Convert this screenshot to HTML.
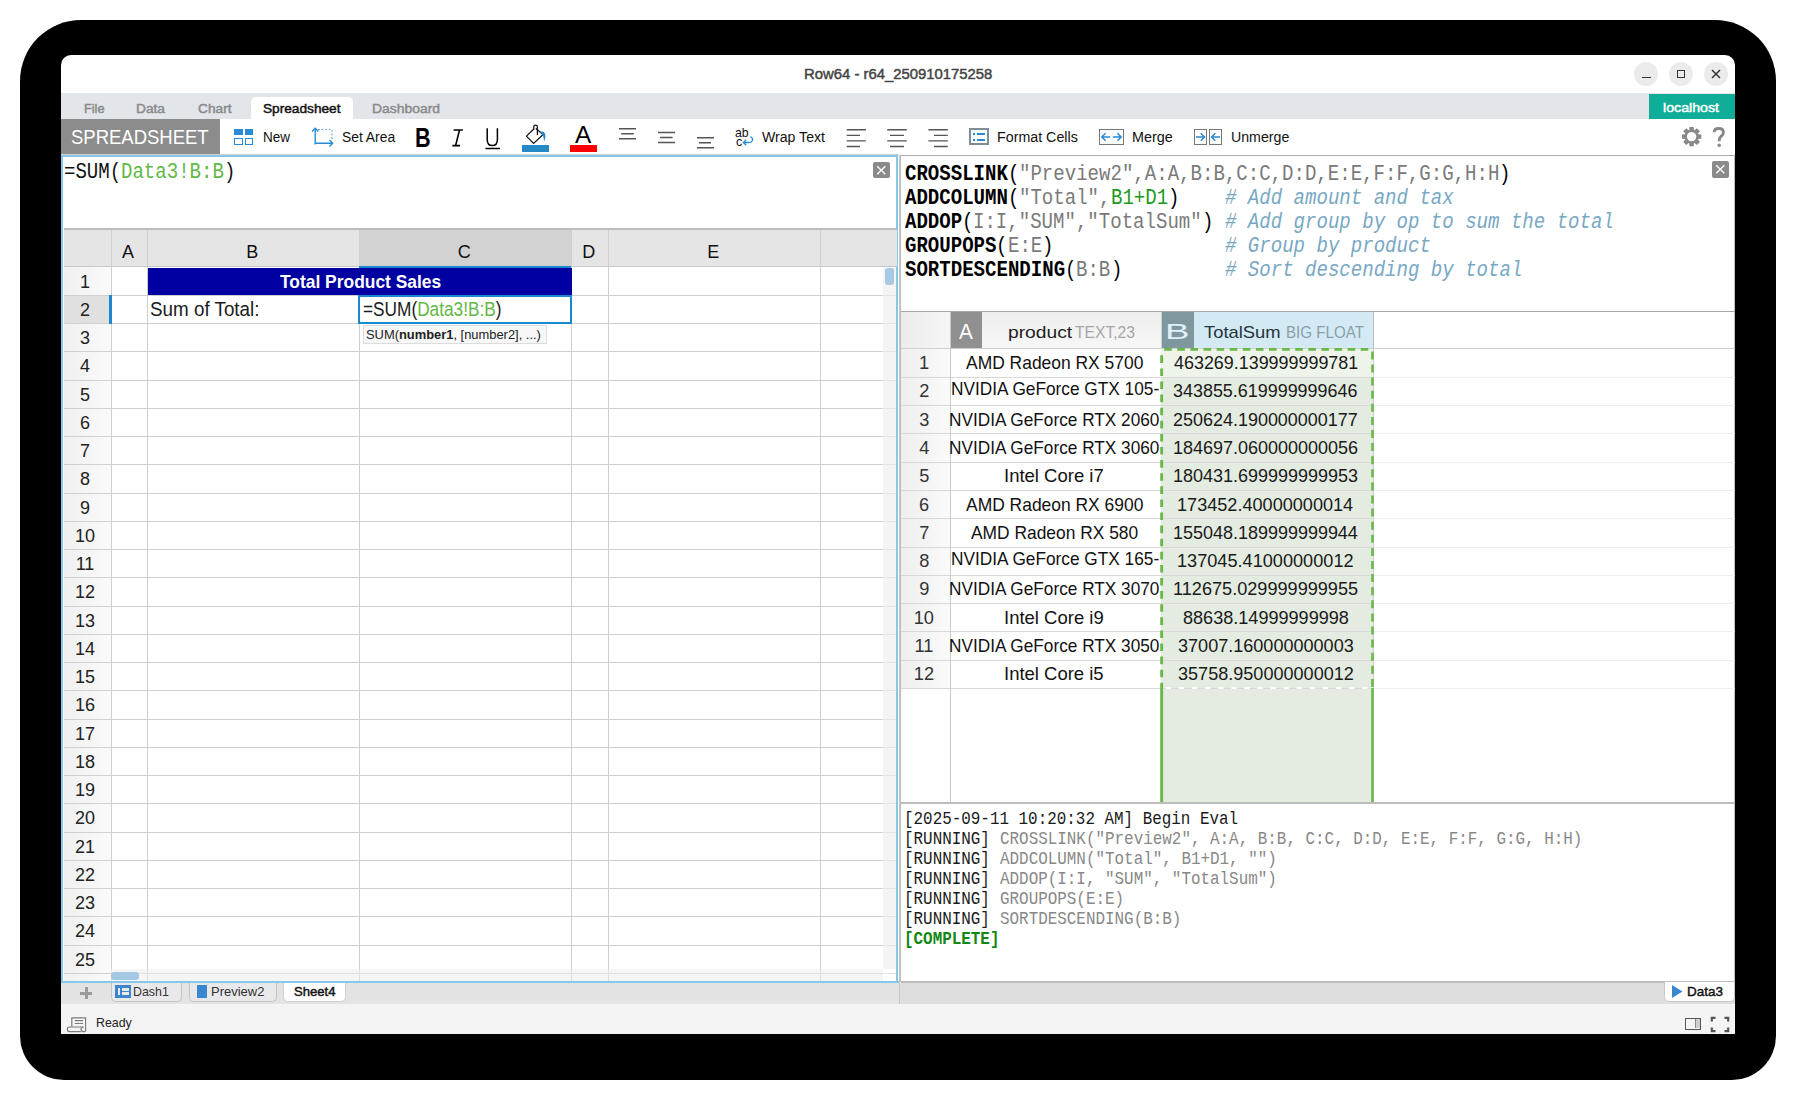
<!DOCTYPE html><html><head><meta charset="utf-8"><title>Row64</title><style>
*{margin:0;padding:0;box-sizing:border-box}
html,body{width:1796px;height:1101px;overflow:hidden;background:#fff;font-family:"Liberation Sans",sans-serif;position:relative}
.abs{position:absolute}
.t{position:absolute;white-space:pre;line-height:1}
svg{position:absolute;overflow:visible}
</style></head><body>
<div class="abs" style="left:20px;top:20px;width:1756px;height:1060px;background:#000;border-radius:61px 61px 44px 44px"></div>
<div class="abs" style="left:61px;top:55px;width:1674px;height:979px;background:#fff;border-radius:10px 10px 0 0"></div>
<div class="t" style="left:804.28px;top:66.80px;font:normal normal 14.5px/1 'Liberation Sans',sans-serif;color:#444;transform:scaleX(1.0247);transform-origin:0 0;-webkit-text-stroke:0.45px currentColor;">Row64 - r64_250910175258</div>
<div class="abs" style="left:1634px;top:62px;width:24px;height:24px;background:#ebebeb;border-radius:12px"></div>
<div class="abs" style="left:1669px;top:62px;width:24px;height:24px;background:#ebebeb;border-radius:12px"></div>
<div class="abs" style="left:1704px;top:62px;width:24px;height:24px;background:#ebebeb;border-radius:12px"></div>
<div class="abs" style="left:1641.5px;top:77px;width:9.5px;height:1.2px;background:#333;"></div>
<div class="abs" style="left:1677px;top:70px;width:8px;height:8px;border:1.5px solid #333"></div>
<svg style="left:1711px;top:69px" width="10" height="10"><path d="M1 1L9 9M9 1L1 9" stroke="#333" stroke-width="1.5"/></svg>
<div class="abs" style="left:61px;top:93px;width:1674px;height:26px;background:#e2e5e9;"></div>
<div class="abs" style="left:251px;top:97px;width:102px;height:22px;background:#fff;border-radius:5px 5px 0 0"></div>
<div class="t" style="left:83.50px;top:101.70px;font:normal normal 13px/1 'Liberation Sans',sans-serif;color:#8a8a8a;transform:scaleX(0.9787);transform-origin:0 0;-webkit-text-stroke:0.45px currentColor;">File</div>
<div class="t" style="left:136.00px;top:101.70px;font:normal normal 13px/1 'Liberation Sans',sans-serif;color:#8a8a8a;transform:scaleX(1.0561);transform-origin:0 0;-webkit-text-stroke:0.45px currentColor;">Data</div>
<div class="t" style="left:197.50px;top:101.70px;font:normal normal 13px/1 'Liberation Sans',sans-serif;color:#8a8a8a;transform:scaleX(1.0538);transform-origin:0 0;-webkit-text-stroke:0.45px currentColor;">Chart</div>
<div class="t" style="left:263.00px;top:101.70px;font:normal normal 13px/1 'Liberation Sans',sans-serif;color:#111;transform:scaleX(1.0512);transform-origin:0 0;-webkit-text-stroke:0.45px currentColor;">Spreadsheet</div>
<div class="t" style="left:371.50px;top:101.70px;font:normal normal 13px/1 'Liberation Sans',sans-serif;color:#8a8a8a;transform:scaleX(1.0692);transform-origin:0 0;-webkit-text-stroke:0.45px currentColor;">Dashboard</div>
<div class="abs" style="left:1649px;top:94px;width:86px;height:25px;background:#10ae98;"></div>
<div class="t" style="left:1663.00px;top:100.50px;font:normal normal 13px/1 'Liberation Sans',sans-serif;color:#fff;transform:scaleX(1.0914);transform-origin:0 0;-webkit-text-stroke:0.45px currentColor;">localhost</div>
<div class="abs" style="left:61px;top:119px;width:159px;height:36px;background:#8c8c8c;"></div>
<div class="t" style="left:70.50px;top:126.40px;font:normal normal 21px/1 'Liberation Sans',sans-serif;color:#fff;transform:scaleX(0.8800);transform-origin:0 0;">SPREADSHEET</div>
<div class="abs" style="left:234px;top:129px;width:8.5px;height:6px;background:#2a8ad4;"></div>
<div class="abs" style="left:244.5px;top:129px;width:8.5px;height:6px;background:#2a8ad4;"></div>
<div class="abs" style="left:234px;top:138px;width:8.5px;height:6.8px;border:1.6px solid #2a8ad4"></div>
<div class="abs" style="left:244.5px;top:138px;width:8.5px;height:6.8px;border:1.6px solid #2a8ad4"></div>
<div class="t" style="left:262.90px;top:129.30px;font:normal normal 15.5px/1 'Liberation Sans',sans-serif;color:#111;transform:scaleX(0.8740);transform-origin:0 0;">New</div>
<svg style="left:310px;top:126px" width="26" height="22"><path d="M5.2 18.5V2.5M2 5.5L5.2 2.3L8.4 5.5M5.2 17.2H22.5M19.5 14L22.7 17.2L19.5 20.4" stroke="#2a8ad4" stroke-width="1.4" fill="none"/><path d="M8 3.5H22V14" stroke="#2a8ad4" stroke-width="1.2" stroke-dasharray="1.8 1.8" fill="none" opacity="0.75"/></svg>
<div class="t" style="left:342.30px;top:129.30px;font:normal normal 15.5px/1 'Liberation Sans',sans-serif;color:#111;transform:scaleX(0.8931);transform-origin:0 0;">Set Area</div>
<div class="t" style="left:415.46px;top:124.80px;font:normal bold 27px/1 'Liberation Sans',sans-serif;color:#000;transform:scaleX(0.8010);transform-origin:0 0;">B</div>
<svg style="left:448px;top:124px" width="20" height="26"><path d="M5.6 6H14.9M4.3 21.6H12.1M11.5 6L7.6 21.6" stroke="#000" stroke-width="1.6" fill="none"/></svg>
<svg style="left:484px;top:126px" width="18" height="26"><path d="M3.2 2.2V13.5Q3.2 19.6 8.3 19.6Q13.4 19.6 13.4 13.5V2.2" stroke="#000" stroke-width="1.5" fill="none"/><path d="M1.5 22.5H16" stroke="#000" stroke-width="1.5"/></svg>
<svg style="left:520px;top:120px" width="32" height="32"><path d="M6.4 16.1L13.6 23.4L23.1 14.5L15.8 8.4" stroke="#111" stroke-width="1.25" fill="none" stroke-linejoin="miter"/><path d="M6.4 16.1L13.8 9" stroke="#111" stroke-width="1.25" fill="none"/><path d="M13.8 9.6V6.8Q13.8 5.2 15.6 5.2Q17.4 5.2 17.4 6.8V15" stroke="#111" stroke-width="1.25" fill="none"/><path d="M20.2 12.2Q22 10.6 24 12.2Q26.2 14.5 25 18.8Q24.6 20.5 24.1 21.5Q24.4 17 21.5 13.5Z" fill="#2589c8"/></svg>
<div class="abs" style="left:521.5px;top:145.3px;width:27px;height:6.3px;background:#2589c8;"></div>
<div class="t" style="left:575.00px;top:123.00px;font:normal normal 24.5px/1 'Liberation Sans',sans-serif;color:#000;transform:scaleX(0.9975);transform-origin:0 0;">A</div>
<div class="abs" style="left:570px;top:145.3px;width:27.2px;height:6.3px;background:#ff0000;"></div>
<svg style="left:600px;top:120px" width="400" height="35"><path d="M19.00 8.70H36.00M21.30 13.70H33.80M19.00 18.70H36.00" stroke="#555" stroke-width="1.35" fill="none"/></svg>
<svg style="left:600px;top:120px" width="400" height="35"><path d="M58.00 12.50H75.00M60.00 17.50H72.60M58.00 22.50H75.00" stroke="#555" stroke-width="1.35" fill="none"/></svg>
<svg style="left:600px;top:120px" width="400" height="35"><path d="M97.00 17.70H114.00M99.00 22.70H111.00M97.00 27.70H114.00" stroke="#555" stroke-width="1.35" fill="none"/></svg>
<div class="t" style="left:735.40px;top:125.50px;font:normal normal 13.5px/1 'Liberation Sans',sans-serif;color:#111;transform:scaleX(0.9057);transform-origin:0 0;">ab</div>
<div class="t" style="left:736.00px;top:134.70px;font:normal normal 13.5px/1 'Liberation Sans',sans-serif;color:#111;transform:scaleX(0.9185);transform-origin:0 0;">c</div>
<svg style="left:740px;top:134px" width="16" height="14"><path d="M10.5 2.5Q13 4 12.5 6.5Q11.5 8.8 8.5 8.5L3.5 8.5M6.2 5.8L3.4 8.5L6.2 11.2" stroke="#2a8ad4" stroke-width="1.3" fill="none"/></svg>
<div class="t" style="left:761.94px;top:129.20px;font:normal normal 15.3px/1 'Liberation Sans',sans-serif;color:#111;transform:scaleX(0.9218);transform-origin:0 0;">Wrap Text</div>
<svg style="left:600px;top:120px" width="400" height="35"><path d="M246.70 9.70H265.90M246.70 15.40H260.00M246.70 20.90H265.90M246.70 26.50H260.00" stroke="#555" stroke-width="1.35" fill="none"/></svg>
<svg style="left:600px;top:120px" width="400" height="35"><path d="M287.20 9.70H306.80M290.00 15.40H304.00M287.20 20.90H306.80M290.00 26.50H304.00" stroke="#555" stroke-width="1.35" fill="none"/></svg>
<svg style="left:600px;top:120px" width="400" height="35"><path d="M328.40 9.70H347.80M334.00 15.40H347.80M328.40 20.90H347.80M334.00 26.50H347.80" stroke="#555" stroke-width="1.35" fill="none"/></svg>
<div class="abs" style="left:969px;top:128.3px;width:20px;height:17px;border:2px solid #7f8d96"></div>
<div class="abs" style="left:973px;top:132.5px;width:2.2px;height:2px;background:#2a8ad4;"></div>
<div class="abs" style="left:977px;top:132.5px;width:8px;height:2px;background:#2a8ad4;"></div>
<div class="abs" style="left:973px;top:138.5px;width:2.2px;height:2px;background:#2a8ad4;"></div>
<div class="abs" style="left:977px;top:138.5px;width:8px;height:2px;background:#2a8ad4;"></div>
<div class="t" style="left:996.84px;top:129.00px;font:normal normal 15.3px/1 'Liberation Sans',sans-serif;color:#111;transform:scaleX(0.9316);transform-origin:0 0;">Format Cells</div>
<div class="abs" style="left:1099px;top:129px;width:25px;height:16px;border:1px solid #777"></div>
<svg style="left:1099px;top:129px" width="25" height="16"><path d="M2.8 8H11.2M6.6 4.2L2.8 8L6.6 11.8M13.8 8H22.2M18.4 4.2L22.2 8L18.4 11.8" stroke="#2a8ad4" stroke-width="1.5" fill="none"/></svg>
<div class="t" style="left:1132.42px;top:129.30px;font:normal normal 15.3px/1 'Liberation Sans',sans-serif;color:#111;transform:scaleX(0.9411);transform-origin:0 0;">Merge</div>
<div class="abs" style="left:1194px;top:129px;width:12.5px;height:16px;border:1px solid #777"></div>
<div class="abs" style="left:1209px;top:129px;width:12.8px;height:16px;border:1px solid #777"></div>
<svg style="left:1194px;top:129px" width="28" height="16"><path d="M2 8H10.5M6.8 4.2L10.6 8L6.8 11.8M17.5 8H26M21.3 4.2L17.5 8L21.3 11.8" stroke="#2a8ad4" stroke-width="1.5" fill="none"/></svg>
<div class="t" style="left:1230.51px;top:129.30px;font:normal normal 15.3px/1 'Liberation Sans',sans-serif;color:#111;transform:scaleX(0.9268);transform-origin:0 0;">Unmerge</div>
<svg style="left:1670px;top:120px" width="40" height="40"><path d="M28.20 14.27 L31.26 14.44 L31.26 18.76 L28.20 18.93 L27.92 19.62 L29.96 21.90 L26.90 24.96 L24.62 22.92 L23.93 23.20 L23.76 26.26 L19.44 26.26 L19.27 23.20 L18.58 22.92 L16.30 24.96 L13.24 21.90 L15.28 19.62 L15.00 18.93 L11.94 18.76 L11.94 14.44 L15.00 14.27 L15.28 13.58 L13.24 11.30 L16.30 8.24 L18.58 10.28 L19.27 10.00 L19.44 6.94 L23.76 6.94 L23.93 10.00 L24.62 10.28 L26.90 8.24 L29.96 11.30 L27.92 13.58Z M26.30 16.60A4.7 4.7 0 1 0 16.90 16.60A4.7 4.7 0 1 0 26.30 16.60Z" fill="#888" fill-rule="evenodd"/></svg>
<svg style="left:1706px;top:122px" width="26" height="28"><path d="M8.2 10.2Q8.2 6.5 12.7 6.5Q17.4 6.5 17.4 10.4Q17.4 12.8 15.2 14.3Q13.2 15.7 13.2 18.2V19.2" stroke="#888" stroke-width="2.9" fill="none"/><circle cx="13.2" cy="23.3" r="1.75" fill="#888"/></svg>
<div class="abs" style="left:61px;top:155px;width:838px;height:827px;background:#fff;"></div>
<div class="abs" style="left:61px;top:154px;width:838px;height:1px;background:#d0d0d0;"></div>
<div class="abs" style="left:61px;top:155.2px;width:837px;height:827.8px;border:2px solid #86c7ea;border-left-width:2.6px;border-right-width:2.5px;border-bottom-width:2.2px"></div>
<div class="t" style="left:63.50px;top:161.50px;font:normal normal 22.0px/1 'Liberation Mono',monospace;color:#111;transform:scaleX(0.8663);transform-origin:0 0;">=SUM(</div>
<div class="t" style="left:120.69px;top:161.50px;font:normal normal 22.0px/1 'Liberation Mono',monospace;color:#62b845;transform:scaleX(0.8663);transform-origin:0 0;">Data3!B:B</div>
<div class="t" style="left:223.62px;top:161.50px;font:normal normal 22.0px/1 'Liberation Mono',monospace;color:#111;transform:scaleX(0.8663);transform-origin:0 0;">)</div>
<div class="abs" style="left:873px;top:161.5px;width:16.5px;height:16.5px;background:#8a8a8a;border-radius:2px"></div>
<svg style="left:873px;top:161.5px" width="17" height="17"><path d="M4.2 4.2L12.3 12.3M12.3 4.2L4.2 12.3" stroke="#fff" stroke-width="1.3"/></svg>
<div class="abs" style="left:64px;top:228px;width:833px;height:2px;background:#bcbcbc;"></div>
<div class="abs" style="left:64px;top:230px;width:833px;height:37px;background:#e5e5e5;"></div>
<div class="abs" style="left:359px;top:230px;width:212px;height:37px;background:#d2d2d2;"></div>
<div class="abs" style="left:110.5px;top:230px;width:1.2px;height:37px;background:#cfcfcf;"></div>
<div class="abs" style="left:147px;top:230px;width:1.2px;height:37px;background:#cfcfcf;"></div>
<div class="abs" style="left:359px;top:230px;width:1.2px;height:37px;background:#cfcfcf;"></div>
<div class="abs" style="left:571px;top:230px;width:1.2px;height:37px;background:#cfcfcf;"></div>
<div class="abs" style="left:608px;top:230px;width:1.2px;height:37px;background:#cfcfcf;"></div>
<div class="abs" style="left:820px;top:230px;width:1.2px;height:37px;background:#cfcfcf;"></div>
<div class="abs" style="left:64px;top:266px;width:833px;height:1.2px;background:#c8c8c8;"></div>
<div class="abs" style="left:64px;top:267px;width:47px;height:715px;background:linear-gradient(90deg,#f0f0f0,#fafafa);"></div>
<div class="abs" style="left:64px;top:295.25px;width:46px;height:28.25px;background:#e0e0e0;"></div>
<div class="abs" style="left:111px;top:267px;width:772px;height:702px;background:#fff;"></div>
<div class="abs" style="left:64px;top:295px;width:819px;height:1px;background:#d0d0d0;"></div>
<div class="abs" style="left:64px;top:323px;width:819px;height:1px;background:#d0d0d0;"></div>
<div class="abs" style="left:64px;top:351px;width:819px;height:1px;background:#d0d0d0;"></div>
<div class="abs" style="left:64px;top:380px;width:819px;height:1px;background:#d0d0d0;"></div>
<div class="abs" style="left:64px;top:408px;width:819px;height:1px;background:#d0d0d0;"></div>
<div class="abs" style="left:64px;top:436px;width:819px;height:1px;background:#d0d0d0;"></div>
<div class="abs" style="left:64px;top:464px;width:819px;height:1px;background:#d0d0d0;"></div>
<div class="abs" style="left:64px;top:493px;width:819px;height:1px;background:#d0d0d0;"></div>
<div class="abs" style="left:64px;top:521px;width:819px;height:1px;background:#d0d0d0;"></div>
<div class="abs" style="left:64px;top:549px;width:819px;height:1px;background:#d0d0d0;"></div>
<div class="abs" style="left:64px;top:577px;width:819px;height:1px;background:#d0d0d0;"></div>
<div class="abs" style="left:64px;top:606px;width:819px;height:1px;background:#d0d0d0;"></div>
<div class="abs" style="left:64px;top:634px;width:819px;height:1px;background:#d0d0d0;"></div>
<div class="abs" style="left:64px;top:662px;width:819px;height:1px;background:#d0d0d0;"></div>
<div class="abs" style="left:64px;top:690px;width:819px;height:1px;background:#d0d0d0;"></div>
<div class="abs" style="left:64px;top:719px;width:819px;height:1px;background:#d0d0d0;"></div>
<div class="abs" style="left:64px;top:747px;width:819px;height:1px;background:#d0d0d0;"></div>
<div class="abs" style="left:64px;top:775px;width:819px;height:1px;background:#d0d0d0;"></div>
<div class="abs" style="left:64px;top:803px;width:819px;height:1px;background:#d0d0d0;"></div>
<div class="abs" style="left:64px;top:832px;width:819px;height:1px;background:#d0d0d0;"></div>
<div class="abs" style="left:64px;top:860px;width:819px;height:1px;background:#d0d0d0;"></div>
<div class="abs" style="left:64px;top:888px;width:819px;height:1px;background:#d0d0d0;"></div>
<div class="abs" style="left:64px;top:916px;width:819px;height:1px;background:#d0d0d0;"></div>
<div class="abs" style="left:64px;top:945px;width:819px;height:1px;background:#d0d0d0;"></div>
<div class="abs" style="left:64px;top:973px;width:819px;height:1px;background:#d0d0d0;"></div>
<div class="abs" style="left:64px;top:1001px;width:819px;height:1px;background:#d0d0d0;"></div>
<div class="abs" style="left:110.5px;top:267px;width:1.1px;height:714px;background:#cfcfcf;"></div>
<div class="abs" style="left:147px;top:267px;width:1.1px;height:714px;background:#cfcfcf;"></div>
<div class="abs" style="left:359px;top:267px;width:1.1px;height:714px;background:#cfcfcf;"></div>
<div class="abs" style="left:571px;top:267px;width:1.1px;height:714px;background:#cfcfcf;"></div>
<div class="abs" style="left:608px;top:267px;width:1.1px;height:714px;background:#cfcfcf;"></div>
<div class="abs" style="left:820px;top:267px;width:1.1px;height:714px;background:#cfcfcf;"></div>
<div class="abs" style="left:147.5px;top:267.5px;width:424px;height:27.3px;background:#0000a2;"></div>
<div class="t" style="left:279.71px;top:273.00px;font:normal bold 18.5px/1 'Liberation Sans',sans-serif;color:#fff;transform:scaleX(0.9409);transform-origin:0 0;">Total Product Sales</div>
<div class="abs" style="left:359px;top:266px;width:212px;height:2px;background:#1a88d0;"></div>
<div class="abs" style="left:109px;top:295.25px;width:2.8px;height:28.25px;background:#1a88d0;"></div>
<div class="t" style="left:79.99px;top:272.62px;font:normal normal 18px/1 'Liberation Sans',sans-serif;color:#222;">1</div>
<div class="t" style="left:79.99px;top:300.88px;font:normal normal 18px/1 'Liberation Sans',sans-serif;color:#222;">2</div>
<div class="t" style="left:79.99px;top:329.12px;font:normal normal 18px/1 'Liberation Sans',sans-serif;color:#222;">3</div>
<div class="t" style="left:79.99px;top:357.38px;font:normal normal 18px/1 'Liberation Sans',sans-serif;color:#222;">4</div>
<div class="t" style="left:79.99px;top:385.62px;font:normal normal 18px/1 'Liberation Sans',sans-serif;color:#222;">5</div>
<div class="t" style="left:79.99px;top:413.88px;font:normal normal 18px/1 'Liberation Sans',sans-serif;color:#222;">6</div>
<div class="t" style="left:79.99px;top:442.12px;font:normal normal 18px/1 'Liberation Sans',sans-serif;color:#222;">7</div>
<div class="t" style="left:79.99px;top:470.38px;font:normal normal 18px/1 'Liberation Sans',sans-serif;color:#222;">8</div>
<div class="t" style="left:79.99px;top:498.62px;font:normal normal 18px/1 'Liberation Sans',sans-serif;color:#222;">9</div>
<div class="t" style="left:74.99px;top:526.88px;font:normal normal 18px/1 'Liberation Sans',sans-serif;color:#222;">10</div>
<div class="t" style="left:75.66px;top:555.12px;font:normal normal 18px/1 'Liberation Sans',sans-serif;color:#222;">11</div>
<div class="t" style="left:74.99px;top:583.38px;font:normal normal 18px/1 'Liberation Sans',sans-serif;color:#222;">12</div>
<div class="t" style="left:74.99px;top:611.62px;font:normal normal 18px/1 'Liberation Sans',sans-serif;color:#222;">13</div>
<div class="t" style="left:74.99px;top:639.88px;font:normal normal 18px/1 'Liberation Sans',sans-serif;color:#222;">14</div>
<div class="t" style="left:74.99px;top:668.12px;font:normal normal 18px/1 'Liberation Sans',sans-serif;color:#222;">15</div>
<div class="t" style="left:74.99px;top:696.38px;font:normal normal 18px/1 'Liberation Sans',sans-serif;color:#222;">16</div>
<div class="t" style="left:74.99px;top:724.62px;font:normal normal 18px/1 'Liberation Sans',sans-serif;color:#222;">17</div>
<div class="t" style="left:74.99px;top:752.88px;font:normal normal 18px/1 'Liberation Sans',sans-serif;color:#222;">18</div>
<div class="t" style="left:74.99px;top:781.12px;font:normal normal 18px/1 'Liberation Sans',sans-serif;color:#222;">19</div>
<div class="t" style="left:74.99px;top:809.38px;font:normal normal 18px/1 'Liberation Sans',sans-serif;color:#222;">20</div>
<div class="t" style="left:74.99px;top:837.62px;font:normal normal 18px/1 'Liberation Sans',sans-serif;color:#222;">21</div>
<div class="t" style="left:74.99px;top:865.88px;font:normal normal 18px/1 'Liberation Sans',sans-serif;color:#222;">22</div>
<div class="t" style="left:74.99px;top:894.12px;font:normal normal 18px/1 'Liberation Sans',sans-serif;color:#222;">23</div>
<div class="t" style="left:74.99px;top:922.38px;font:normal normal 18px/1 'Liberation Sans',sans-serif;color:#222;">24</div>
<div class="t" style="left:74.99px;top:950.62px;font:normal normal 18px/1 'Liberation Sans',sans-serif;color:#222;">25</div>
<div class="t" style="left:121.95px;top:243.00px;font:normal normal 18px/1 'Liberation Sans',sans-serif;color:#111;">A</div>
<div class="t" style="left:246.20px;top:243.00px;font:normal normal 18px/1 'Liberation Sans',sans-serif;color:#111;">B</div>
<div class="t" style="left:457.70px;top:243.00px;font:normal normal 18px/1 'Liberation Sans',sans-serif;color:#111;">C</div>
<div class="t" style="left:582.20px;top:243.00px;font:normal normal 18px/1 'Liberation Sans',sans-serif;color:#111;">D</div>
<div class="t" style="left:707.20px;top:243.00px;font:normal normal 18px/1 'Liberation Sans',sans-serif;color:#111;">E</div>
<div class="t" style="left:150.14px;top:300.30px;font:normal normal 19.3px/1 'Liberation Sans',sans-serif;color:#1a1a1a;transform:scaleX(0.9759);transform-origin:0 0;">Sum of Total:</div>
<div class="abs" style="left:358px;top:295px;width:213.5px;height:28.5px;border:2px solid #1a88d0;background:#fff"></div>
<div class="t" style="left:363.20px;top:300.00px;font:normal normal 19.3px/1 'Liberation Sans',sans-serif;color:#1a1a1a;transform:scaleX(0.8943);transform-origin:0 0"><span style="color:#1a1a1a">=SUM(</span><span style="color:#62b845">Data3!B:B</span><span style="color:#1a1a1a">)</span></div>
<div class="abs" style="left:362.5px;top:324.6px;width:184px;height:19px;background:#f7f7f7;border:1px solid #dcdcdc"></div>
<div class="t" style="left:366.3px;top:329.00px;font:normal normal 12.4px/1 'Liberation Sans',sans-serif;color:#222;transform:scaleX(1.0409);transform-origin:0 0">SUM(<b>number1</b>, [number2], ...)</div>
<div class="abs" style="left:883px;top:267px;width:13px;height:702px;background:#f4f4f4;"></div>
<div class="abs" style="left:883px;top:295px;width:13px;height:1px;background:#e4e4e4;"></div>
<div class="abs" style="left:883px;top:323px;width:13px;height:1px;background:#e4e4e4;"></div>
<div class="abs" style="left:883px;top:351px;width:13px;height:1px;background:#e4e4e4;"></div>
<div class="abs" style="left:883px;top:380px;width:13px;height:1px;background:#e4e4e4;"></div>
<div class="abs" style="left:883px;top:408px;width:13px;height:1px;background:#e4e4e4;"></div>
<div class="abs" style="left:883px;top:436px;width:13px;height:1px;background:#e4e4e4;"></div>
<div class="abs" style="left:883px;top:464px;width:13px;height:1px;background:#e4e4e4;"></div>
<div class="abs" style="left:883px;top:493px;width:13px;height:1px;background:#e4e4e4;"></div>
<div class="abs" style="left:883px;top:521px;width:13px;height:1px;background:#e4e4e4;"></div>
<div class="abs" style="left:883px;top:549px;width:13px;height:1px;background:#e4e4e4;"></div>
<div class="abs" style="left:883px;top:577px;width:13px;height:1px;background:#e4e4e4;"></div>
<div class="abs" style="left:883px;top:606px;width:13px;height:1px;background:#e4e4e4;"></div>
<div class="abs" style="left:883px;top:634px;width:13px;height:1px;background:#e4e4e4;"></div>
<div class="abs" style="left:883px;top:662px;width:13px;height:1px;background:#e4e4e4;"></div>
<div class="abs" style="left:883px;top:690px;width:13px;height:1px;background:#e4e4e4;"></div>
<div class="abs" style="left:883px;top:719px;width:13px;height:1px;background:#e4e4e4;"></div>
<div class="abs" style="left:883px;top:747px;width:13px;height:1px;background:#e4e4e4;"></div>
<div class="abs" style="left:883px;top:775px;width:13px;height:1px;background:#e4e4e4;"></div>
<div class="abs" style="left:883px;top:803px;width:13px;height:1px;background:#e4e4e4;"></div>
<div class="abs" style="left:883px;top:832px;width:13px;height:1px;background:#e4e4e4;"></div>
<div class="abs" style="left:883px;top:860px;width:13px;height:1px;background:#e4e4e4;"></div>
<div class="abs" style="left:883px;top:888px;width:13px;height:1px;background:#e4e4e4;"></div>
<div class="abs" style="left:883px;top:916px;width:13px;height:1px;background:#e4e4e4;"></div>
<div class="abs" style="left:883px;top:945px;width:13px;height:1px;background:#e4e4e4;"></div>
<div class="abs" style="left:883px;top:973px;width:13px;height:1px;background:#e4e4e4;"></div>
<div class="abs" style="left:885px;top:267.5px;width:9px;height:17px;background:#a7c9e3;border-radius:3px"></div>
<div class="abs" style="left:64px;top:969px;width:833px;height:12px;overflow:hidden">
<div class="t" style="left:-8.51px;top:9.85px;font:normal normal 18px/1 'Liberation Sans',sans-serif;color:#222">26</div>
</div>
<div class="abs" style="left:111px;top:969px;width:772px;height:12px;background:rgba(236,236,236,0.55);"></div>
<div class="abs" style="left:110.8px;top:971.5px;width:28.5px;height:8.2px;background:#a3c8e4;border-radius:3px"></div>
<div class="abs" style="left:898.6px;top:155px;width:1.6px;height:849px;background:#c8c8c8;"></div>
<div class="abs" style="left:900px;top:155px;width:835px;height:827px;background:#fff;"></div>
<div class="abs" style="left:900px;top:154.8px;width:835px;height:1.3px;background:#aaaaaa;"></div>
<div class="abs" style="left:1734px;top:155px;width:1px;height:827px;background:#bbbbbb;"></div>
<div class="abs" style="left:900px;top:155px;width:1px;height:827px;background:#bbbbbb;"></div>
<div class="t" style="left:904.70px;top:164.00px;font:normal bold 22.0px/1 'Liberation Mono',monospace;color:#000;transform:scaleX(0.8663);transform-origin:0 0;">CROSSLINK</div>
<div class="t" style="left:1007.64px;top:164.00px;font:normal normal 22.0px/1 'Liberation Mono',monospace;color:#000;transform:scaleX(0.8663);transform-origin:0 0;">(</div>
<div class="t" style="left:1019.08px;top:164.00px;font:normal normal 22.0px/1 'Liberation Mono',monospace;color:#7a7a7a;transform:scaleX(0.8663);transform-origin:0 0;">&quot;Preview2&quot;,A:A,B:B,C:C,D:D,E:E,F:F,G:G,H:H</div>
<div class="t" style="left:1499.45px;top:164.00px;font:normal normal 22.0px/1 'Liberation Mono',monospace;color:#000;transform:scaleX(0.8663);transform-origin:0 0;">)</div>
<div class="t" style="left:904.70px;top:188.05px;font:normal bold 22.0px/1 'Liberation Mono',monospace;color:#000;transform:scaleX(0.8663);transform-origin:0 0;">ADDCOLUMN</div>
<div class="t" style="left:1007.64px;top:188.05px;font:normal normal 22.0px/1 'Liberation Mono',monospace;color:#000;transform:scaleX(0.8663);transform-origin:0 0;">(</div>
<div class="t" style="left:1019.08px;top:188.05px;font:normal normal 22.0px/1 'Liberation Mono',monospace;color:#7a7a7a;transform:scaleX(0.8663);transform-origin:0 0;">&quot;Total&quot;,</div>
<div class="t" style="left:1110.58px;top:188.05px;font:normal normal 22.0px/1 'Liberation Mono',monospace;color:#1a9a1a;transform:scaleX(0.8663);transform-origin:0 0;">B1+D1</div>
<div class="t" style="left:1167.76px;top:188.05px;font:normal normal 22.0px/1 'Liberation Mono',monospace;color:#000;transform:scaleX(0.8663);transform-origin:0 0;">)</div>
<div class="t" style="left:1179.20px;top:188.05px;font:normal normal 22.0px/1 'Liberation Mono',monospace;color:#000;transform:scaleX(0.8663);transform-origin:0 0;">    </div>
<div class="t" style="left:1224.95px;top:188.05px;font:italic normal 22.0px/1 'Liberation Mono',monospace;color:#78a8c4;transform:scaleX(0.8663);transform-origin:0 0;"># Add amount and tax</div>
<div class="t" style="left:904.70px;top:212.10px;font:normal bold 22.0px/1 'Liberation Mono',monospace;color:#000;transform:scaleX(0.8663);transform-origin:0 0;">ADDOP</div>
<div class="t" style="left:961.89px;top:212.10px;font:normal normal 22.0px/1 'Liberation Mono',monospace;color:#000;transform:scaleX(0.8663);transform-origin:0 0;">(</div>
<div class="t" style="left:973.33px;top:212.10px;font:normal normal 22.0px/1 'Liberation Mono',monospace;color:#7a7a7a;transform:scaleX(0.8663);transform-origin:0 0;">I:I,&quot;SUM&quot;,&quot;TotalSum&quot;</div>
<div class="t" style="left:1202.08px;top:212.10px;font:normal normal 22.0px/1 'Liberation Mono',monospace;color:#000;transform:scaleX(0.8663);transform-origin:0 0;">)</div>
<div class="t" style="left:1213.51px;top:212.10px;font:normal normal 22.0px/1 'Liberation Mono',monospace;color:#000;transform:scaleX(0.8663);transform-origin:0 0;"> </div>
<div class="t" style="left:1224.95px;top:212.10px;font:italic normal 22.0px/1 'Liberation Mono',monospace;color:#78a8c4;transform:scaleX(0.8663);transform-origin:0 0;"># Add group by op to sum the total</div>
<div class="t" style="left:904.70px;top:236.15px;font:normal bold 22.0px/1 'Liberation Mono',monospace;color:#000;transform:scaleX(0.8663);transform-origin:0 0;">GROUPOPS</div>
<div class="t" style="left:996.20px;top:236.15px;font:normal normal 22.0px/1 'Liberation Mono',monospace;color:#000;transform:scaleX(0.8663);transform-origin:0 0;">(</div>
<div class="t" style="left:1007.64px;top:236.15px;font:normal normal 22.0px/1 'Liberation Mono',monospace;color:#7a7a7a;transform:scaleX(0.8663);transform-origin:0 0;">E:E</div>
<div class="t" style="left:1041.95px;top:236.15px;font:normal normal 22.0px/1 'Liberation Mono',monospace;color:#000;transform:scaleX(0.8663);transform-origin:0 0;">)</div>
<div class="t" style="left:1053.39px;top:236.15px;font:normal normal 22.0px/1 'Liberation Mono',monospace;color:#000;transform:scaleX(0.8663);transform-origin:0 0;">               </div>
<div class="t" style="left:1224.95px;top:236.15px;font:italic normal 22.0px/1 'Liberation Mono',monospace;color:#78a8c4;transform:scaleX(0.8663);transform-origin:0 0;"># Group by product</div>
<div class="t" style="left:904.70px;top:260.20px;font:normal bold 22.0px/1 'Liberation Mono',monospace;color:#000;transform:scaleX(0.8663);transform-origin:0 0;">SORTDESCENDING</div>
<div class="t" style="left:1064.83px;top:260.20px;font:normal normal 22.0px/1 'Liberation Mono',monospace;color:#000;transform:scaleX(0.8663);transform-origin:0 0;">(</div>
<div class="t" style="left:1076.26px;top:260.20px;font:normal normal 22.0px/1 'Liberation Mono',monospace;color:#7a7a7a;transform:scaleX(0.8663);transform-origin:0 0;">B:B</div>
<div class="t" style="left:1110.58px;top:260.20px;font:normal normal 22.0px/1 'Liberation Mono',monospace;color:#000;transform:scaleX(0.8663);transform-origin:0 0;">)</div>
<div class="t" style="left:1122.01px;top:260.20px;font:normal normal 22.0px/1 'Liberation Mono',monospace;color:#000;transform:scaleX(0.8663);transform-origin:0 0;">         </div>
<div class="t" style="left:1224.95px;top:260.20px;font:italic normal 22.0px/1 'Liberation Mono',monospace;color:#78a8c4;transform:scaleX(0.8663);transform-origin:0 0;"># Sort descending by total</div>
<div class="abs" style="left:1712px;top:161.2px;width:16.7px;height:16.5px;background:#8a8a8a;border-radius:2px"></div>
<svg style="left:1712px;top:161.2px" width="17" height="17"><path d="M4.2 4.2L12.3 12.3M12.3 4.2L4.2 12.3" stroke="#fff" stroke-width="1.3"/></svg>
<div class="abs" style="left:901px;top:310.5px;width:834px;height:1.5px;background:#a8a8a8;"></div>
<div class="abs" style="left:901px;top:312px;width:49px;height:36.5px;background:linear-gradient(90deg,#ececec,#f6f6f6);"></div>
<div class="abs" style="left:950px;top:312px;width:211px;height:36.5px;background:linear-gradient(180deg,#eeeeee,#f7f7f7);"></div>
<div class="abs" style="left:950.7px;top:312px;width:31.1px;height:36px;background:#909090;"></div>
<div class="abs" style="left:1161px;top:312px;width:32.8px;height:36px;background:#7f979f;"></div>
<div class="abs" style="left:1193.8px;top:312px;width:179.6px;height:36px;background:#d3e9f3;"></div>
<div class="abs" style="left:1373px;top:312px;width:1px;height:36px;background:#bcbcbc;"></div>
<div class="t" style="left:959.36px;top:321.10px;font:normal normal 22px/1 'Liberation Sans',sans-serif;color:#fff;transform:scaleX(0.9390);transform-origin:0 0;">A</div>
<div class="t" style="left:1164.51px;top:321.10px;font:normal normal 22px/1 'Liberation Sans',sans-serif;color:#dff0f8;transform:scaleX(1.6638);transform-origin:0 0;">B</div>
<div class="t" style="left:1008.27px;top:323.70px;font:normal normal 17px/1 'Liberation Sans',sans-serif;color:#222;transform:scaleX(1.1317);transform-origin:0 0;">product</div>
<div class="t" style="left:1075.35px;top:323.70px;font:normal normal 17px/1 'Liberation Sans',sans-serif;color:#a6a6a6;transform:scaleX(0.9209);transform-origin:0 0;">TEXT,23</div>
<div class="t" style="left:1203.69px;top:323.70px;font:normal normal 17px/1 'Liberation Sans',sans-serif;color:#26343c;transform:scaleX(1.0799);transform-origin:0 0;">TotalSum</div>
<div class="t" style="left:1285.76px;top:323.70px;font:normal normal 17px/1 'Liberation Sans',sans-serif;color:#8aa0a8;transform:scaleX(0.8909);transform-origin:0 0;">BIG FLOAT</div>
<div class="abs" style="left:901px;top:348.5px;width:49px;height:339.5px;background:linear-gradient(90deg,#efefef,#fafafa);"></div>
<div class="abs" style="left:1161px;top:348.5px;width:212px;height:453.5px;background:#e4ebe0;"></div>
<div class="abs" style="left:1161px;top:348.5px;width:212px;height:28.29px;background:#eef4e9;"></div>
<div class="abs" style="left:901px;top:348px;width:472px;height:1px;background:#d8d8d8;"></div>
<div class="abs" style="left:1373px;top:348px;width:362px;height:1px;background:#eeeeee;"></div>
<div class="abs" style="left:901px;top:377px;width:472px;height:1px;background:#d8d8d8;"></div>
<div class="abs" style="left:1373px;top:377px;width:362px;height:1px;background:#eeeeee;"></div>
<div class="abs" style="left:901px;top:405px;width:472px;height:1px;background:#d8d8d8;"></div>
<div class="abs" style="left:1373px;top:405px;width:362px;height:1px;background:#eeeeee;"></div>
<div class="abs" style="left:901px;top:433px;width:472px;height:1px;background:#d8d8d8;"></div>
<div class="abs" style="left:1373px;top:433px;width:362px;height:1px;background:#eeeeee;"></div>
<div class="abs" style="left:901px;top:462px;width:472px;height:1px;background:#d8d8d8;"></div>
<div class="abs" style="left:1373px;top:462px;width:362px;height:1px;background:#eeeeee;"></div>
<div class="abs" style="left:901px;top:490px;width:472px;height:1px;background:#d8d8d8;"></div>
<div class="abs" style="left:1373px;top:490px;width:362px;height:1px;background:#eeeeee;"></div>
<div class="abs" style="left:901px;top:518px;width:472px;height:1px;background:#d8d8d8;"></div>
<div class="abs" style="left:1373px;top:518px;width:362px;height:1px;background:#eeeeee;"></div>
<div class="abs" style="left:901px;top:547px;width:472px;height:1px;background:#d8d8d8;"></div>
<div class="abs" style="left:1373px;top:547px;width:362px;height:1px;background:#eeeeee;"></div>
<div class="abs" style="left:901px;top:575px;width:472px;height:1px;background:#d8d8d8;"></div>
<div class="abs" style="left:1373px;top:575px;width:362px;height:1px;background:#eeeeee;"></div>
<div class="abs" style="left:901px;top:603px;width:472px;height:1px;background:#d8d8d8;"></div>
<div class="abs" style="left:1373px;top:603px;width:362px;height:1px;background:#eeeeee;"></div>
<div class="abs" style="left:901px;top:631px;width:472px;height:1px;background:#d8d8d8;"></div>
<div class="abs" style="left:1373px;top:631px;width:362px;height:1px;background:#eeeeee;"></div>
<div class="abs" style="left:901px;top:660px;width:472px;height:1px;background:#d8d8d8;"></div>
<div class="abs" style="left:1373px;top:660px;width:362px;height:1px;background:#eeeeee;"></div>
<div class="abs" style="left:901px;top:688px;width:472px;height:1px;background:#d8d8d8;"></div>
<div class="abs" style="left:1373px;top:688px;width:362px;height:1px;background:#eeeeee;"></div>
<div class="abs" style="left:901px;top:348px;width:834px;height:1.2px;background:#cfcfcf;"></div>
<div class="abs" style="left:949.5px;top:312px;width:1.2px;height:490px;background:#c8c8c8;"></div>
<div class="abs" style="left:1160.5px;top:312px;width:1px;height:36.5px;background:#cfcfcf;"></div>
<div class="abs" style="left:1372.5px;top:348.5px;width:1px;height:453.5px;background:#cfcfcf;"></div>
<div class="t" style="left:918.89px;top:354.14px;font:normal normal 18.2px/1 'Liberation Sans',sans-serif;color:#333;transform:scaleX(1.0000);transform-origin:0 0;">1</div>
<div class="t" style="left:966.37px;top:354.14px;font:normal normal 18.2px/1 'Liberation Sans',sans-serif;color:#111;transform:scaleX(0.9588);transform-origin:0 0;">AMD Radeon RX 5700</div>
<div class="t" style="left:1173.65px;top:354.14px;font:normal normal 18.2px/1 'Liberation Sans',sans-serif;color:#1a1a1a;transform:scaleX(0.9846);transform-origin:0 0;">463269.139999999781</div>
<div class="t" style="left:919.14px;top:382.44px;font:normal normal 18.2px/1 'Liberation Sans',sans-serif;color:#333;transform:scaleX(1.0000);transform-origin:0 0;">2</div>
<div class="t" style="left:951.19px;top:380.44px;font:normal normal 18.2px/1 'Liberation Sans',sans-serif;color:#111;transform:scaleX(0.9489);transform-origin:0 0;">NVIDIA GeForce GTX 105-</div>
<div class="t" style="left:1173.37px;top:382.44px;font:normal normal 18.2px/1 'Liberation Sans',sans-serif;color:#1a1a1a;transform:scaleX(0.9856);transform-origin:0 0;">343855.619999999646</div>
<div class="t" style="left:919.19px;top:410.72px;font:normal normal 18.2px/1 'Liberation Sans',sans-serif;color:#333;transform:scaleX(1.0000);transform-origin:0 0;">3</div>
<div class="t" style="left:949.14px;top:410.72px;font:normal normal 18.2px/1 'Liberation Sans',sans-serif;color:#111;transform:scaleX(0.9477);transform-origin:0 0;">NVIDIA GeForce RTX 2060</div>
<div class="t" style="left:1173.15px;top:410.72px;font:normal normal 18.2px/1 'Liberation Sans',sans-serif;color:#1a1a1a;transform:scaleX(0.9874);transform-origin:0 0;">250624.190000000177</div>
<div class="t" style="left:919.20px;top:439.01px;font:normal normal 18.2px/1 'Liberation Sans',sans-serif;color:#333;transform:scaleX(1.0000);transform-origin:0 0;">4</div>
<div class="t" style="left:949.14px;top:439.01px;font:normal normal 18.2px/1 'Liberation Sans',sans-serif;color:#111;transform:scaleX(0.9477);transform-origin:0 0;">NVIDIA GeForce RTX 3060</div>
<div class="t" style="left:1172.68px;top:439.01px;font:normal normal 18.2px/1 'Liberation Sans',sans-serif;color:#1a1a1a;transform:scaleX(0.9893);transform-origin:0 0;">184697.060000000056</div>
<div class="t" style="left:919.15px;top:467.30px;font:normal normal 18.2px/1 'Liberation Sans',sans-serif;color:#333;transform:scaleX(1.0000);transform-origin:0 0;">5</div>
<div class="t" style="left:1004.49px;top:467.30px;font:normal normal 18.2px/1 'Liberation Sans',sans-serif;color:#111;transform:scaleX(1.0174);transform-origin:0 0;">Intel Core i7</div>
<div class="t" style="left:1172.68px;top:467.30px;font:normal normal 18.2px/1 'Liberation Sans',sans-serif;color:#1a1a1a;transform:scaleX(0.9893);transform-origin:0 0;">180431.699999999953</div>
<div class="t" style="left:919.08px;top:495.59px;font:normal normal 18.2px/1 'Liberation Sans',sans-serif;color:#333;transform:scaleX(1.0000);transform-origin:0 0;">6</div>
<div class="t" style="left:966.37px;top:495.59px;font:normal normal 18.2px/1 'Liberation Sans',sans-serif;color:#111;transform:scaleX(0.9588);transform-origin:0 0;">AMD Radeon RX 6900</div>
<div class="t" style="left:1177.03px;top:495.59px;font:normal normal 18.2px/1 'Liberation Sans',sans-serif;color:#1a1a1a;transform:scaleX(0.9953);transform-origin:0 0;">173452.40000000014</div>
<div class="t" style="left:919.13px;top:523.88px;font:normal normal 18.2px/1 'Liberation Sans',sans-serif;color:#333;transform:scaleX(1.0000);transform-origin:0 0;">7</div>
<div class="t" style="left:971.47px;top:523.88px;font:normal normal 18.2px/1 'Liberation Sans',sans-serif;color:#111;transform:scaleX(0.9560);transform-origin:0 0;">AMD Radeon RX 580</div>
<div class="t" style="left:1172.69px;top:523.88px;font:normal normal 18.2px/1 'Liberation Sans',sans-serif;color:#1a1a1a;transform:scaleX(0.9879);transform-origin:0 0;">155048.189999999944</div>
<div class="t" style="left:919.14px;top:552.17px;font:normal normal 18.2px/1 'Liberation Sans',sans-serif;color:#333;transform:scaleX(1.0000);transform-origin:0 0;">8</div>
<div class="t" style="left:951.19px;top:550.17px;font:normal normal 18.2px/1 'Liberation Sans',sans-serif;color:#111;transform:scaleX(0.9489);transform-origin:0 0;">NVIDIA GeForce GTX 165-</div>
<div class="t" style="left:1177.02px;top:552.17px;font:normal normal 18.2px/1 'Liberation Sans',sans-serif;color:#1a1a1a;transform:scaleX(0.9975);transform-origin:0 0;">137045.41000000012</div>
<div class="t" style="left:919.14px;top:580.46px;font:normal normal 18.2px/1 'Liberation Sans',sans-serif;color:#333;transform:scaleX(1.0000);transform-origin:0 0;">9</div>
<div class="t" style="left:949.14px;top:580.46px;font:normal normal 18.2px/1 'Liberation Sans',sans-serif;color:#111;transform:scaleX(0.9477);transform-origin:0 0;">NVIDIA GeForce RTX 3070</div>
<div class="t" style="left:1172.67px;top:580.46px;font:normal normal 18.2px/1 'Liberation Sans',sans-serif;color:#1a1a1a;transform:scaleX(0.9964);transform-origin:0 0;">112675.029999999955</div>
<div class="t" style="left:913.75px;top:608.75px;font:normal normal 18.2px/1 'Liberation Sans',sans-serif;color:#333;transform:scaleX(1.0000);transform-origin:0 0;">10</div>
<div class="t" style="left:1004.49px;top:608.75px;font:normal normal 18.2px/1 'Liberation Sans',sans-serif;color:#111;transform:scaleX(1.0168);transform-origin:0 0;">Intel Core i9</div>
<div class="t" style="left:1182.61px;top:608.75px;font:normal normal 18.2px/1 'Liberation Sans',sans-serif;color:#1a1a1a;transform:scaleX(0.9938);transform-origin:0 0;">88638.14999999998</div>
<div class="t" style="left:914.50px;top:637.04px;font:normal normal 18.2px/1 'Liberation Sans',sans-serif;color:#333;transform:scaleX(1.0000);transform-origin:0 0;">11</div>
<div class="t" style="left:949.14px;top:637.04px;font:normal normal 18.2px/1 'Liberation Sans',sans-serif;color:#111;transform:scaleX(0.9477);transform-origin:0 0;">NVIDIA GeForce RTX 3050</div>
<div class="t" style="left:1177.71px;top:637.04px;font:normal normal 18.2px/1 'Liberation Sans',sans-serif;color:#1a1a1a;transform:scaleX(0.9929);transform-origin:0 0;">37007.160000000003</div>
<div class="t" style="left:913.85px;top:665.34px;font:normal normal 18.2px/1 'Liberation Sans',sans-serif;color:#333;transform:scaleX(1.0000);transform-origin:0 0;">12</div>
<div class="t" style="left:1004.49px;top:665.34px;font:normal normal 18.2px/1 'Liberation Sans',sans-serif;color:#111;transform:scaleX(1.0158);transform-origin:0 0;">Intel Core i5</div>
<div class="t" style="left:1177.71px;top:665.34px;font:normal normal 18.2px/1 'Liberation Sans',sans-serif;color:#1a1a1a;transform:scaleX(0.9936);transform-origin:0 0;">35758.950000000012</div>
<svg style="left:1150px;top:340px" width="240" height="470"><path d="M14.2 9.35H222" stroke="#6ab84a" stroke-width="2.6" stroke-dasharray="7.6 5.5" fill="none"/><path d="M11.65 11V348" stroke="#6ab84a" stroke-width="2.9" stroke-dasharray="7.6 5.5" stroke-dashoffset="-4.3" fill="none"/><path d="M222.5 11.4V348" stroke="#6ab84a" stroke-width="2.6" stroke-dasharray="8 5.1" fill="none"/><path d="M11.65 348V462" stroke="#6ab84a" stroke-width="2.9" fill="none"/><path d="M222.5 348V462" stroke="#6ab84a" stroke-width="2.6" fill="none"/><path d="M15.8 348H222" stroke="#fff" stroke-width="2.2" stroke-dasharray="5.2 7.9" fill="none"/></svg>
<div class="abs" style="left:901px;top:802px;width:834px;height:1.5px;background:#bdbdbd;"></div>
<div class="t" style="left:904.00px;top:810.70px;font:normal normal 17.6px/1 'Liberation Mono',monospace;color:#1a1a1a;transform:scaleX(0.9042);transform-origin:0 0;">[2025-09-11 10:20:32 AM] Begin Eval</div>
<div class="t" style="left:904.00px;top:830.72px;font:normal normal 17.6px/1 'Liberation Mono',monospace;color:#1a1a1a;transform:scaleX(0.9042);transform-origin:0 0;">[RUNNING] </div>
<div class="t" style="left:999.50px;top:830.72px;font:normal normal 17.6px/1 'Liberation Mono',monospace;color:#888888;transform:scaleX(0.9042);transform-origin:0 0;">CROSSLINK(&quot;Preview2&quot;, A:A, B:B, C:C, D:D, E:E, F:F, G:G, H:H)</div>
<div class="t" style="left:904.00px;top:850.74px;font:normal normal 17.6px/1 'Liberation Mono',monospace;color:#1a1a1a;transform:scaleX(0.9042);transform-origin:0 0;">[RUNNING] </div>
<div class="t" style="left:999.50px;top:850.74px;font:normal normal 17.6px/1 'Liberation Mono',monospace;color:#888888;transform:scaleX(0.9042);transform-origin:0 0;">ADDCOLUMN(&quot;Total&quot;, B1+D1, &quot;&quot;)</div>
<div class="t" style="left:904.00px;top:870.76px;font:normal normal 17.6px/1 'Liberation Mono',monospace;color:#1a1a1a;transform:scaleX(0.9042);transform-origin:0 0;">[RUNNING] </div>
<div class="t" style="left:999.50px;top:870.76px;font:normal normal 17.6px/1 'Liberation Mono',monospace;color:#888888;transform:scaleX(0.9042);transform-origin:0 0;">ADDOP(I:I, &quot;SUM&quot;, &quot;TotalSum&quot;)</div>
<div class="t" style="left:904.00px;top:890.78px;font:normal normal 17.6px/1 'Liberation Mono',monospace;color:#1a1a1a;transform:scaleX(0.9042);transform-origin:0 0;">[RUNNING] </div>
<div class="t" style="left:999.50px;top:890.78px;font:normal normal 17.6px/1 'Liberation Mono',monospace;color:#888888;transform:scaleX(0.9042);transform-origin:0 0;">GROUPOPS(E:E)</div>
<div class="t" style="left:904.00px;top:910.80px;font:normal normal 17.6px/1 'Liberation Mono',monospace;color:#1a1a1a;transform:scaleX(0.9042);transform-origin:0 0;">[RUNNING] </div>
<div class="t" style="left:999.50px;top:910.80px;font:normal normal 17.6px/1 'Liberation Mono',monospace;color:#888888;transform:scaleX(0.9042);transform-origin:0 0;">SORTDESCENDING(B:B)</div>
<div class="t" style="left:904.00px;top:930.82px;font:normal bold 17.6px/1 'Liberation Mono',monospace;color:#118811;transform:scaleX(0.9042);transform-origin:0 0;">[COMPLETE]</div>
<div class="abs" style="left:901px;top:980.8px;width:834px;height:2.2px;background:#bdbdbd;"></div>
<div class="abs" style="left:61px;top:983px;width:837.6px;height:21px;background:#e3e3e3;"></div>
<div class="abs" style="left:80px;top:991.5px;width:12px;height:3px;background:#9a9a9a;"></div>
<div class="abs" style="left:84.5px;top:987px;width:3px;height:12px;background:#9a9a9a;"></div>
<div class="abs" style="left:110.7px;top:981px;width:71.7px;height:20.5px;background:#e9e9eb;border:1px solid #c4c4c4;border-top:none;border-radius:0 0 5px 5px"></div>
<div class="abs" style="left:188.6px;top:981px;width:88.00000000000003px;height:20.5px;background:#e9e9eb;border:1px solid #c4c4c4;border-top:none;border-radius:0 0 5px 5px"></div>
<div class="abs" style="left:282.6px;top:981px;width:63.89999999999998px;height:20.5px;background:#ffffff;border:1px solid #d0d0d0;border-top:none;border-radius:0 0 5px 5px"></div>
<div class="abs" style="left:61px;top:980.8px;width:837.5px;height:2.2px;background:#86c7ea;"></div>
<div class="abs" style="left:115px;top:985px;width:16px;height:12.6px;background:#3a87d0"></div>
<div class="abs" style="left:117.5px;top:987.5px;width:2.5px;height:7.6px;background:#e9e9eb;"></div>
<div class="abs" style="left:122px;top:987.5px;width:6.8px;height:3px;background:#e9e9eb;"></div>
<div class="abs" style="left:122px;top:992px;width:6.8px;height:3px;background:#e9e9eb;"></div>
<div class="t" style="left:133.38px;top:985.00px;font:normal normal 13.2px/1 'Liberation Sans',sans-serif;color:#333;transform:scaleX(0.9413);transform-origin:0 0;">Dash1</div>
<div class="abs" style="left:197px;top:985px;width:10px;height:12.6px;background:#3a87d0;"></div>
<div class="t" style="left:211.24px;top:985.00px;font:normal normal 13.2px/1 'Liberation Sans',sans-serif;color:#333;transform:scaleX(0.9857);transform-origin:0 0;">Preview2</div>
<div class="t" style="left:293.71px;top:985.00px;font:normal normal 13.2px/1 'Liberation Sans',sans-serif;color:#111;transform:scaleX(0.9912);transform-origin:0 0;-webkit-text-stroke:0.45px currentColor;">Sheet4</div>
<div class="abs" style="left:900.2px;top:983px;width:835px;height:21px;background:#dedede;"></div>
<div class="abs" style="left:1663.9px;top:981.5px;width:71px;height:20.3px;background:#fff;border:1px solid #c8c8c8;border-top:none;border-radius:0 0 5px 5px"></div>
<svg style="left:1671px;top:984px" width="14" height="16"><path d="M1 1L11.5 7.5L1 14Z" fill="#3a87d0"/></svg>
<div class="t" style="left:1686.70px;top:985.00px;font:normal normal 13.5px/1 'Liberation Sans',sans-serif;color:#111;transform:scaleX(0.9959);transform-origin:0 0;-webkit-text-stroke:0.45px currentColor;">Data3</div>
<div class="abs" style="left:61px;top:1004px;width:1674px;height:30px;background:#f4f4f4;"></div>
<svg style="left:64px;top:1014px" width="26" height="20"><g stroke="#7a7a7a" stroke-width="1.15" fill="none"><path d="M7.8 12.8V3.8H21.6V16.6Q21.6 17.6 20.6 17.6H18.3"/><path d="M10.8 6.6H19M10.8 9.5H19"/><path d="M19 13H5.5Q3.3 13 3.3 15.3Q3.3 17.6 5.5 17.6H16.8"/><path d="M19.5 13Q16.8 13.6 17 15.6Q17.3 17.5 19 17.6"/></g></svg>
<div class="t" style="left:95.59px;top:1015.80px;font:normal normal 13.6px/1 'Liberation Sans',sans-serif;color:#222;transform:scaleX(0.9091);transform-origin:0 0;">Ready</div>
<div class="abs" style="left:1685.2px;top:1018px;width:15.6px;height:11.6px;border:1.2px solid #555;background:#f4f4f4"></div>
<div class="abs" style="left:1695.5px;top:1019.2px;width:4.1px;height:9.2px;background:#cfcfcf;"></div>
<div class="abs" style="left:1694.8px;top:1019.2px;width:0.9px;height:9.2px;background:#888;"></div>
<svg style="left:1710px;top:1016px" width="20" height="17"><path d="M1.8 5.5V1.8H5.5M14.5 1.8H18.2V5.5M18.2 11.5V15.2H14.5M5.5 15.2H1.8V11.5" stroke="#555" stroke-width="2.2" fill="none"/></svg>
</body></html>
